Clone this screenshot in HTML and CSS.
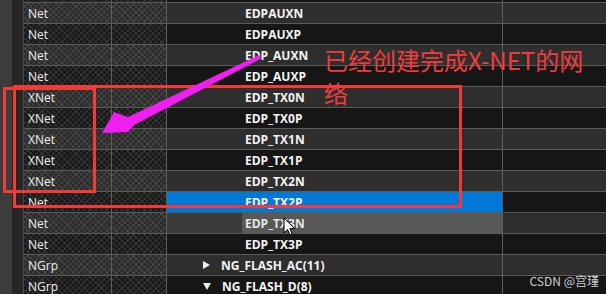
FILE: index.html
```html
<!DOCTYPE html>
<html>
<head>
<meta charset="utf-8">
<link rel="stylesheet" href="styles.css">
</head>
<body>
<div class="screen">
  <div class="gutter"><div class="g1"></div><div class="g2"></div></div>
  <div class="table">
    <div class="row dark"><div class="c type"></div><div class="c blank"></div><div class="c name"></div><div class="c extra"></div></div>
    <div class="row light"><div class="c type">Net</div><div class="c blank"></div><div class="c name">EDPAUXN</div><div class="c extra"></div></div>
    <div class="row dark"><div class="c type">Net</div><div class="c blank"></div><div class="c name">EDPAUXP</div><div class="c extra"></div></div>
    <div class="row light"><div class="c type">Net</div><div class="c blank"></div><div class="c name">EDP_AUXN</div><div class="c extra"></div></div>
    <div class="row dark"><div class="c type">Net</div><div class="c blank"></div><div class="c name">EDP_AUXP</div><div class="c extra"></div></div>
    <div class="row light"><div class="c type">XNet</div><div class="c blank"></div><div class="c name">EDP_TX0N</div><div class="c extra"></div></div>
    <div class="row dark"><div class="c type">XNet</div><div class="c blank"></div><div class="c name">EDP_TX0P</div><div class="c extra"></div></div>
    <div class="row light"><div class="c type">XNet</div><div class="c blank"></div><div class="c name">EDP_TX1N</div><div class="c extra"></div></div>
    <div class="row dark"><div class="c type">XNet</div><div class="c blank"></div><div class="c name">EDP_TX1P</div><div class="c extra"></div></div>
    <div class="row light"><div class="c type">XNet</div><div class="c blank"></div><div class="c name">EDP_TX2N</div><div class="c extra"></div></div>
    <div class="row dark"><div class="c type">Net</div><div class="c blank"></div><div class="c name selected">EDP_TX2P</div><div class="c extra"></div></div>
    <div class="row light"><div class="c type">Net</div><div class="c blank"></div><div class="c name hover">EDP_TX3N</div><div class="c extra"></div></div>
    <div class="row dark"><div class="c type">Net</div><div class="c blank"></div><div class="c name">EDP_TX3P</div><div class="c extra"></div></div>
    <div class="row light"><div class="c type">NGrp</div><div class="c blank"></div><div class="c group"><svg class="tri" width="7" height="8" viewBox="0 0 7 8"><path d="M0 0 L7 4 L0 8 Z" fill="#f0f0f0"/></svg><span>NG_FLASH_AC(11)</span></div><div class="c extra"></div></div>
    <div class="row dark"><div class="c type">NGrp</div><div class="c blank"></div><div class="c group"><svg class="tri" width="8" height="7" viewBox="0 0 8 7"><path d="M0 0 L8 0 L4 7 Z" fill="#f0f0f0"/></svg><span>NG_FLASH_D(8)</span></div><div class="c extra"></div></div>
  </div>

  <div class="box box-small"></div>
  <div class="box box-big"></div>
  <div class="note">已经创建完成X-NET的网<br>络</div>
  <svg class="arrow" width="606" height="294" viewBox="0 0 606 294"><polygon points="259,55 262,58 134,125 128,132 102,133 114,112 128,117" fill="#f01ef0"/></svg>
  <svg class="cursor" width="13" height="20" viewBox="0 0 13 20"><path d="M1 1 L1 16 L4.5 12.5 L7 18 L9.2 17 L6.8 11.6 L11.5 11.6 Z" fill="#ffffff" stroke="#000000" stroke-width="1"/></svg>
  <div class="mark">CSDN @宫瑾</div>
</div>
</body>
</html>
```
FILE: styles.css
```css
html, body {
  margin: 0;
  padding: 0;
  background: #161616;
}
.screen {
  position: relative;
  width: 606px;
  height: 294px;
  overflow: hidden;
  display: flex;
  font-family: "Open Sans", "Noto Sans", sans-serif;
  font-size: 12px;
  color: #ececec;
}
.gutter {
  display: flex;
  width: 24px;
  flex: none;
}
.g1 {
  width: 12px;
  background: #3c3c3c;
}
.g2 {
  width: 11px;
  background: #262626;
  border-right: 1px solid #4a4a4a;
}
.table {
  flex: 1;
  margin-top: -19px;
}
.row {
  display: grid;
  grid-template-columns: 87px 55px 336px 1fr;
  height: 21px;
  box-sizing: border-box;
  border-top: 1px solid #5a5a5a;
}
.c {
  box-sizing: border-box;
  height: 20px;
  display: flex;
  align-items: center;
  white-space: nowrap;
}
.blank, .name, .group, .extra {
  border-left: 1px solid #5e5e5e;
}
.type, .blank {
  background-image:
    repeating-linear-gradient(45deg, rgba(255,255,255,0.085) 0 1px, transparent 1px 4px),
    repeating-linear-gradient(-45deg, rgba(255,255,255,0.085) 0 1px, transparent 1px 4px);
}
.light .type, .light .blank { background-color: #2c2c2c; }
.dark .type, .dark .blank { background-color: #191919; }
.light .name, .light .group, .light .extra { background-color: #2e2e2e; }
.dark .name, .dark .group, .dark .extra { background-color: #161616; }
.type {
  padding-left: 4px;
  color: #ececec;
}
.name {
  padding-left: 78px;
  font-weight: 700;
  color: #f4f4f4;
}
.dark .name.selected {
  background-color: #0078d7;
}
.light .name.hover {
  background: linear-gradient(to right, #3a3a3a 0 75px, #585858 75px);
  color: #e6e6e6;
}
.group {
  padding-left: 36px;
  font-weight: 700;
  color: #f4f4f4;
}
.tri {
  margin-right: 11px;
  flex: none;
}
.box {
  position: absolute;
  border: 3px solid #f23a3a;
  box-sizing: border-box;
}
.box-small {
  left: 3px;
  top: 87px;
  width: 93px;
  height: 106px;
}
.box-big {
  left: 13px;
  top: 85px;
  width: 449px;
  height: 123px;
}
.note {
  position: absolute;
  left: 324px;
  top: 43px;
  font-family: "Noto Sans CJK SC", sans-serif;
  font-size: 24px;
  line-height: 33px;
  color: #f03c3c;
  white-space: nowrap;
}
.arrow {
  position: absolute;
  left: 0;
  top: 0;
}
.cursor {
  position: absolute;
  left: 283px;
  top: 217px;
}
.mark {
  position: absolute;
  right: 7px;
  bottom: 6px;
  font-family: "Noto Sans CJK SC", sans-serif;
  font-size: 12px;
  line-height: 14px;
  color: #cfcfcf;
}
```
